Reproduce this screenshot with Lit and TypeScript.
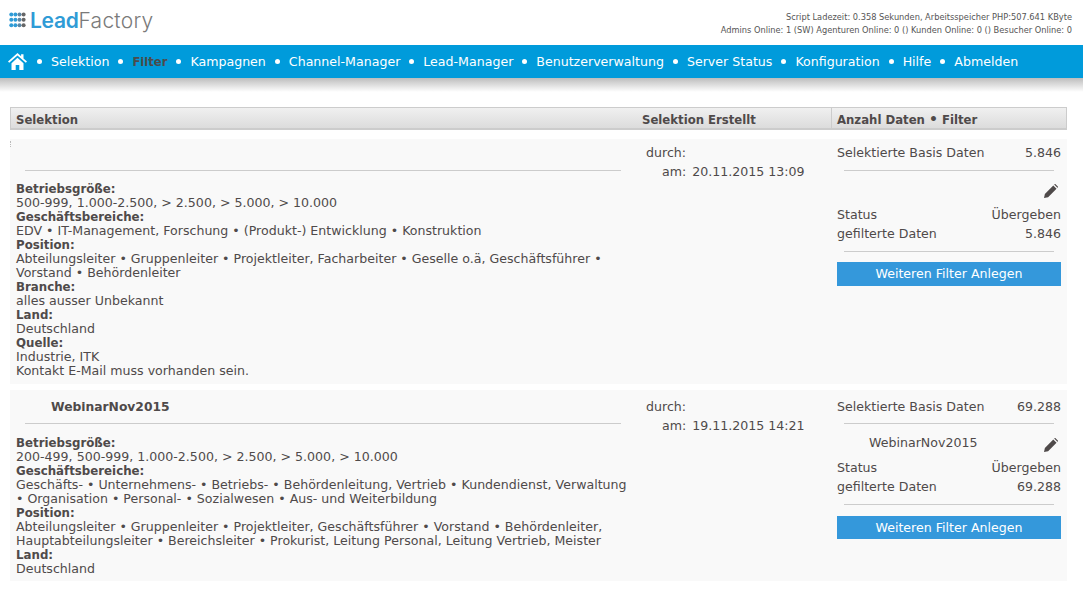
import { LitElement, html, css, svg } from "lit";
import { customElement } from "lit/decorators.js";

const NAV = ["Selektion","Filter","Kampagnen","Channel-Manager","Lead-Manager","Benutzerverwaltung","Server Status","Konfiguration","Hilfe","Abmelden"];

const dots = () => {
  const out = [];
  for (let r = 0; r < 3; r++) for (let c = 0; c < 4; c++) {
    const col = c < 2 ? "#2f9bd6" : c === 2 ? "#5a86a5" : "#666";
    out.push(svg`<circle cx=${2.3 + c * 4.1} cy=${2.4 + r * 5.4} r="2" fill=${col}></circle>`);
  }
  return out;
};

interface Sec { h: string; t: string[] }
const row1: Sec[] = [
  { h: "Betriebsgröße:", t: ["500-999, 1.000-2.500, > 2.500, > 5.000, > 10.000"] },
  { h: "Geschäftsbereiche:", t: ["EDV • IT-Management, Forschung • (Produkt-) Entwicklung • Konstruktion"] },
  { h: "Position:", t: ["Abteilungsleiter • Gruppenleiter • Projektleiter, Facharbeiter • Geselle o.ä, Geschäftsführer •", "Vorstand • Behördenleiter"] },
  { h: "Branche:", t: ["alles ausser Unbekannt"] },
  { h: "Land:", t: ["Deutschland"] },
  { h: "Quelle:", t: ["Industrie, ITK", "Kontakt E-Mail muss vorhanden sein."] },
];
const row2: Sec[] = [
  { h: "Betriebsgröße:", t: ["200-499, 500-999, 1.000-2.500, > 2.500, > 5.000, > 10.000"] },
  { h: "Geschäftsbereiche:", t: ["Geschäfts- • Unternehmens- • Betriebs- • Behördenleitung, Vertrieb • Kundendienst, Verwaltung", "• Organisation • Personal- • Sozialwesen • Aus- und Weiterbildung"] },
  { h: "Position:", t: ["Abteilungsleiter • Gruppenleiter • Projektleiter, Geschäftsführer • Vorstand • Behördenleiter,", "Hauptabteilungsleiter • Bereichsleiter • Prokurist, Leitung Personal, Leitung Vertrieb, Meister"] },
  { h: "Land:", t: ["Deutschland"] },
];

@customElement("app-root")
export class AppRoot extends LitElement {
  static styles = css`
    :host { display: block; width: 1083px; height: 590px; overflow: hidden; background: #fff; font-family: "DejaVu Sans", Verdana, sans-serif; font-size: 12.6px; color: #4f4a4a; }
    .top { height: 45px; display: flex; justify-content: space-between; }
    .logo { display: flex; align-items: center; gap: 4px; padding: 0 0 4px 9px; height: 44px; box-sizing: border-box; }
    .logo svg { flex: none; }
    .logo-text { font-family: Inter, sans-serif; font-size: 21px; letter-spacing: -0.3px; color: #7a7a7a; line-height: 1; font-weight: 300; }
    .logo-text b { color: #2f9bd6; font-weight: 600; }
    .logo-text span { letter-spacing: 0.25px; }
    .stats { padding: 10.5px 11px 0 0; text-align: right; font-size: 8.25px; line-height: 13px; color: #555; }
    nav { height: 33px; background: #009bdb; display: flex; align-items: center; padding-left: 8px; color: #fff; font-size: 12.6px; position: relative; }
    nav::after { content: ""; position: absolute; left: 0; right: 0; top: 33px; height: 14px; background: linear-gradient(#bdbdbd, #fff); }
    nav .home { display: block; margin-right: 10px; flex: none; }
    nav .d { width: 5px; height: 5px; border-radius: 50%; background: #fff; margin-right: 9px; flex: none; }
    nav .i { margin-right: 9px; white-space: nowrap; }
    nav .act { color: #4b4b4b; font-weight: 700; font-size: 11.6px; }
    .wrap { padding: 29px 16px 0 10px; }
    .head { height: 23px; box-sizing: border-box; border: 1px solid #ccc; border-width: 1px 1px 2px 1px; background: linear-gradient(#f0f0f0, #dcdcdc); display: grid; grid-template-columns: 626px 194px 1fr; grid-template-rows: 20px; font-weight: 700; font-size: 11.7px; }
    .head > div { padding-left: 5px; line-height: 24px; }
    .head > div:nth-child(3) { border-left: 1px solid #ccc; }
    .head .blob { display: inline-block; width: 9px; text-align: center; font-size: 14px; line-height: 0; }
    .row { background: #f9f9f9; display: grid; grid-template-columns: 626px 195px 1fr; position: relative; }
    .r1 { margin-top: 9px; height: 245px; }
    .r2 { margin-top: 6px; height: 191px; }
    .grip { position: absolute; left: 0; top: 2px; height: 6px; border-left: 1px dotted #bbb; }
    .left { padding-left: 6px; line-height: 14px; }
    .title { margin: 0 0 0 9px; width: 596px; border-bottom: 1px solid #ccc; font-weight: 700; font-size: 12.3px; }
    .r1 .title { height: 31px; line-height: 31px; }
    .r2 .title { height: 33px; line-height: 35px; }
    .title span { padding-left: 26px; }
    .r1 .sec { margin-top: 11px; }
    .r2 .sec { margin-top: 12px; }
    .left b { display: block; font-size: 11.8px; }
    .left div.l { white-space: nowrap; }
    .mid { line-height: 19px; padding-left: 10px; }
    .r1 .mid, .r1 .right { padding-top: 4px; }
    .r2 .mid, .r2 .right { padding-top: 7px; }
    .mid .am { display: flex; padding-left: 16px; gap: 6px; }
    .right { padding-left: 6px; padding-right: 6px; line-height: 19px; }
    .kv { display: flex; justify-content: space-between; }
    hr { border: 0; border-top: 1px solid #ccc; margin: 0 7px; height: 0; }
    .r1 hr.a { margin-top: 8px; }
    .r2 hr.a { margin-top: 7px; }
    hr.b { margin-top: 8px; }
    .edit { display: flex; justify-content: flex-end; align-items: flex-start; padding-right: 3px; line-height: 14px; }
    .r1 .edit { height: 23px; margin-top: 11px; }
    .r2 .edit { height: 22px; margin-top: 12px; }
    .edit svg { flex: none; margin-top: 2px; }
    .edit .n { flex: 1; padding-left: 32px; }
    .btn { margin-top: 10px; height: 24px; background: #3498db; color: #fff; text-align: center; line-height: 24px; }
    .r2 .btn { margin-top: 11px; height: 23px; }
  `;

  private pencil() {
    return html`<svg width="14" height="14" viewBox="0 0 16 16"><path fill="#4f4a4a" d="M0 16l1-4.700L10.600 1.700l3.700 3.700L4.700 15zM11.600.7l.5-.5c.3-.3.8-.3 1.100 0l2.600 2.600c.3.300.3.800 0 1.100l-.5.500z"/></svg>`;
  }

  private rowTpl(cls: string, title: string, date: string, base: string, filt: string, secs: Sec[]) {
    return html`<div class="row ${cls}">
      ${cls === "r1" ? html`<span class="grip"></span>` : ""}
      <div class="left">
        <div class="title"><span>${title}</span></div>
        <div class="sec">
          ${secs.map(s => html`<b>${s.h}</b>${s.t.map(l => html`<div class="l">${l}</div>`)}`)}
        </div>
      </div>
      <div class="mid">
        <div>durch:</div>
        <div class="am"><span>am:</span><span>${date}</span></div>
      </div>
      <div class="right">
        <div class="kv"><span>Selektierte Basis Daten</span><span>${base}</span></div>
        <hr class="a" />
        <div class="edit"><span class="n">${title}</span>${this.pencil()}</div>
        <div class="kv"><span>Status</span><span>Übergeben</span></div>
        <div class="kv"><span>gefilterte Daten</span><span>${filt}</span></div>
        <hr class="b" />
        <div class="btn">Weiteren Filter Anlegen</div>
      </div>
    </div>`;
  }

  render() {
    return html`
      <div class="top">
        <div class="logo">
          <svg width="17" height="16" viewBox="0 0 17 16">${dots()}</svg>
          <div class="logo-text"><b>Lead</b><span>Factory</span></div>
        </div>
        <div class="stats">
          <div>Script Ladezeit: 0.358 Sekunden, Arbeitsspeicher PHP:507.641 KByte</div>
          <div>Admins Online: 1 (SW) Agenturen Online: 0 () Kunden Online: 0 () Besucher Online: 0</div>
        </div>
      </div>
      <nav>
        <svg class="home" width="19" height="17" viewBox="0 0 19 17"><path fill="#fff" d="M9.500 0L0 8.600l1.200 1.200L9.500 2.400l8.300 7.400L19 8.600 15.500 5.400V1.200h-2.400v2zM3.500 10.200V17h4.200v-5h3.600v5h4.200v-6.800L9.500 4.800z"/></svg>
        ${NAV.map(n => html`<span class="d"></span><span class="i ${n === "Filter" ? "act" : ""}">${n}</span>`)}
      </nav>
      <div class="wrap">
        <div class="head"><div>Selektion</div><div>Selektion Erstellt</div><div>Anzahl Daten <span class="blob">•</span> Filter</div></div>
        ${this.rowTpl("r1", "", "20.11.2015 13:09", "5.846", "5.846", row1)}
        ${this.rowTpl("r2", "WebinarNov2015", "19.11.2015 14:21", "69.288", "69.288", row2)}
      </div>
    `;
  }
}
